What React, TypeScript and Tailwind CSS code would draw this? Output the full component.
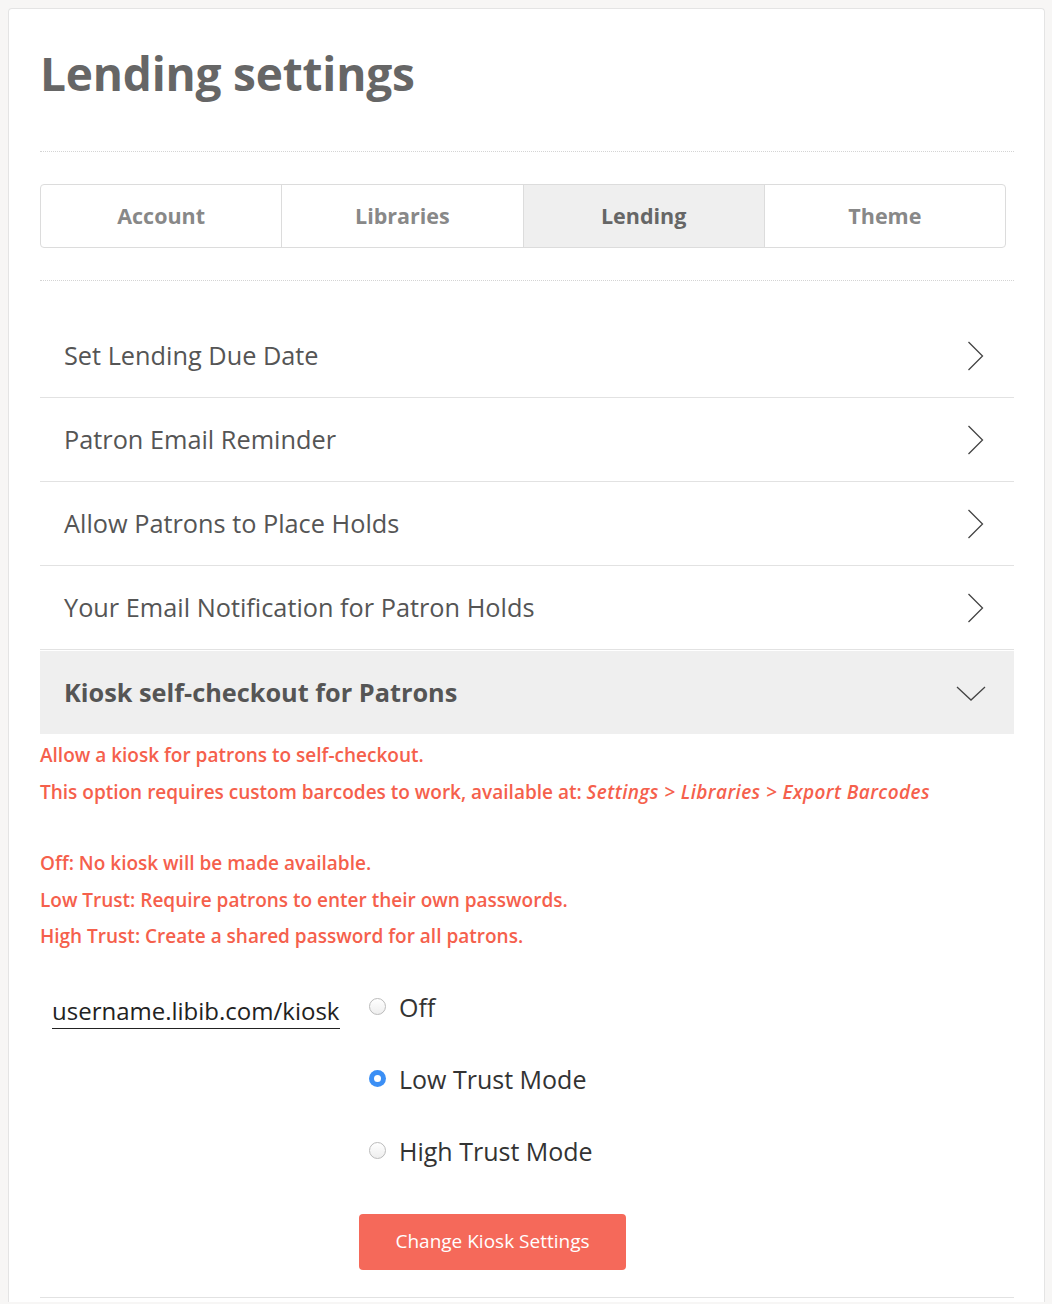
import React, { useState } from "react";

const tabs = ["Account", "Libraries", "Lending", "Theme"];

const rows = [
  "Set Lending Due Date",
  "Patron Email Reminder",
  "Allow Patrons to Place Holds",
  "Your Email Notification for Patron Holds",
];

const ChevronRight = () => (
  <svg width="17" height="30" viewBox="0 0 17 30" fill="none">
    <polyline points="1.5,1 15.5,15 1.5,29" stroke="#444" strokeWidth="1.3" />
  </svg>
);

const ChevronDown = () => (
  <svg width="30" height="18" viewBox="0 0 30 18" fill="none">
    <polyline points="1,3 15,16 29,3" stroke="#444" strokeWidth="1.3" />
  </svg>
);

const modes = ["Off", "Low Trust Mode", "High Trust Mode"];

export default function App() {
  const [mode, setMode] = useState("Low Trust Mode");

  return (
    <div
      className="min-h-[1304px] bg-[#f7f6f5] pt-2 px-2"
      style={{ fontFamily: '"Open Sans", sans-serif' }}
    >
      <div className="w-[1037px] rounded-t border border-[#e4e4e4] border-b-0 bg-white px-[31px] pb-1">
        <h1 className="pt-[32px] pb-[46px] text-[46px] font-bold leading-[64px] text-[#666] tracking-[-0.2px]">
          Lending settings
        </h1>

        <div className="border-t border-dotted border-[#d4d4d4] w-[974px]" />

        <div className="mt-8 flex h-16 w-[966px] overflow-hidden rounded border border-[#dcdcdc]">
          {tabs.map((t, i) => (
            <div
              key={t}
              className={`flex flex-1 items-center justify-center text-[21.5px] font-bold ${
                i > 0 ? "border-l border-[#dcdcdc]" : ""
              } ${t === "Lending" ? "bg-[#efefef] text-[#666]" : "text-[#888]"}`}
            >
              {t}
            </div>
          ))}
        </div>

        <div className="mt-8 border-t border-dotted border-[#d4d4d4] w-[974px]" />

        <div className="mt-[33px] w-[974px]">
          {rows.map((r) => (
            <div
              key={r}
              className="flex h-[84px] items-center justify-between border-b border-[#e2e2e2] pl-6 pr-[30px]"
            >
              <span className="text-[25.3px] text-[#555]">{r}</span>
              <ChevronRight />
            </div>
          ))}
          <div className="mt-px flex h-[83px] items-center justify-between bg-[#efefef] pl-6 pr-7">
            <span className="text-[25.3px] font-bold text-[#555]">
              Kiosk self-checkout for Patrons
            </span>
            <ChevronDown />
          </div>
        </div>

        <div className="pt-[3px] text-[19px] font-semibold leading-[36.5px] text-[#f5604c]">
          <p>Allow a kiosk for patrons to self-checkout.</p>
          <p>
            This option requires custom barcodes to work, available at:{" "}
            <em className="tracking-[0.4px]">Settings &gt; Libraries &gt; Export Barcodes</em>
          </p>
          <p className="mt-[35px]">Off: No kiosk will be made available.</p>
          <p>Low Trust: Require patrons to enter their own passwords.</p>
          <p>High Trust: Create a shared password for all patrons.</p>
        </div>

        <div className="mt-[40px] flex">
          <div className="ml-3 w-[288px]">
            <div className="border-b border-[#222] pb-[1px] text-[24px] leading-[32px] text-[#222]">
              username.libib.com/kiosk
            </div>
          </div>
          <div className="ml-[29px] flex flex-col">
            {modes.map((m, i) => (
              <label
                key={m}
                className={`flex cursor-pointer items-center ${i > 0 ? "mt-[40px]" : "-mt-[4px]"}`}
                onClick={() => setMode(m)}
              >
                {mode === m ? (
                  <span className="flex h-[17px] w-[17px] items-center justify-center rounded-full bg-[#3b8ff5]">
                    <span className="h-[7px] w-[7px] rounded-full bg-white" />
                  </span>
                ) : (
                  <span className="h-[17px] w-[17px] rounded-full border border-[#bbb] bg-gradient-to-b from-white to-[#eee]" />
                )}
                <span className="ml-[13px] text-[25px] leading-[32px] text-[#333]">{m}</span>
              </label>
            ))}
            <button className="-ml-[10px] mt-[47px] h-[56px] w-[267px] rounded bg-[#f5695a] text-[19px] text-white">
              Change Kiosk Settings
            </button>
          </div>
        </div>

        <div className="mt-[27px] border-b border-[#e2e2e2] w-[974px]" />
      </div>
    </div>
  );
}
